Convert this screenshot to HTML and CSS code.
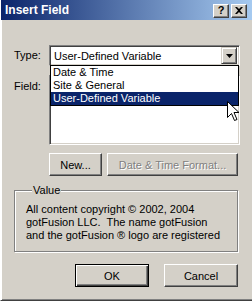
FILE: index.html
```html
<!DOCTYPE html>
<html lang="en">
<head>
    <meta charset="UTF-8">
    <title>Insert Field</title>
    <link rel="stylesheet" href="styles.css">
</head>
<body>
    <div class="window">
        <div class="titlebar">
            <span class="title">Insert Field</span>
            <div class="caption-buttons">
                <span class="cap-btn cap-help">?</span>
                <span class="cap-btn">
                    <svg width="8" height="7" viewBox="0 0 8 7">
                        <path d="M0 0h2l2 2 2-2h2L5 3.5 8 7H6L4 5 2 7H0l3-3.5z" fill="#000"/>
                    </svg>
                </span>
            </div>
        </div>

        <div class="content">
            <div class="form">
                <span class="label">Type:</span>
                <div class="combo">
                    <span class="combo-text">User-Defined Variable</span>
                    <span class="drop-btn">
                        <svg width="7" height="4" viewBox="0 0 7 4"><path d="M0 0h7L3.5 4z" fill="#000"/></svg>
                    </span>
                    <ul class="drop-list">
                        <li>Date &amp; Time</li>
                        <li>Site &amp; General</li>
                        <li class="selected">User-Defined Variable</li>
                    </ul>
                </div>

                <span class="label label-field">Field:</span>
                <div class="listbox"></div>

                <div class="action-row">
                    <button class="btn btn-new">New...</button>
                    <button class="btn btn-format" disabled>Date &amp; Time Format...</button>
                </div>
            </div>

            <fieldset class="group">
                <legend>Value</legend>
                <p>All content copyright &copy; 2002, 2004<br>gotFusion LLC.&nbsp; The name gotFusion<br>and the gotFusion &reg; logo are registered</p>
            </fieldset>

            <div class="dialog-buttons">
                <button class="btn btn-default">OK</button>
                <button class="btn">Cancel</button>
            </div>
        </div>

        <!-- mouse pointer over the open list -->
        <svg class="cursor" width="13" height="21" viewBox="0 0 13 21">
            <path d="M0.5 0.5V16.5L4.5 12.5L7.5 19.5L10 18.5L7 11.5H12Z" fill="#fff" stroke="#000" stroke-width="1"/>
        </svg>
    </div>
</body>
</html>
```

FILE: styles.css
```css
* {
    margin: 0;
    padding: 0;
    box-sizing: border-box;
}

body {
    background: #D4D0C8;
    font-family: 'Liberation Sans', Arial, sans-serif;
    font-size: 11px;
    color: #000;
}

.window {
    position: relative;
    width: 252px;
    height: 301px;
    background: #D4D0C8;
    border-left: 1px solid #fff;
    border-bottom: 1px solid #404040;
    box-shadow: inset 1px 0 #fff, inset 0 -1px #808080;
    overflow: hidden;
}

.titlebar {
    display: flex;
    align-items: center;
    justify-content: space-between;
    height: 20px;
    margin-left: -1px;
    padding: 0 5px 0 5px;
    background: linear-gradient(90deg, #0A246A, #A6CAF0);
}

.title {
    color: #fff;
    font-weight: bold;
    font-size: 12px;
}

.caption-buttons {
    display: flex;
    gap: 2px;
    margin-top: 1px;
}

.cap-btn {
    display: flex;
    align-items: center;
    justify-content: center;
    width: 16px;
    height: 14px;
    background: #D4D0C8;
    border: 1px solid;
    border-color: #fff #404040 #404040 #fff;
    box-shadow: inset -1px -1px #808080;
}

.cap-help {
    font-weight: bold;
    font-size: 11px;
    line-height: 1;
}

.content {
    padding: 25px 12px 0 13px;
}

.form {
    display: grid;
    grid-template-columns: 26px 1fr;
    column-gap: 9px;
    row-gap: 9px;
}

.label {
    text-align: right;
    line-height: 21px;
    white-space: nowrap;
}

.label-field {
    line-height: 13px;
    margin-top: 5px;
}

.sunken,
.combo,
.listbox {
    background: #fff;
    border: 1px solid;
    border-color: #808080 #fff #fff #808080;
    box-shadow: inset 1px 1px #404040, inset -1px -1px #D4D0C8;
}

.combo {
    position: relative;
    display: flex;
    align-items: center;
    justify-content: space-between;
    height: 21px;
    padding: 0 2px 0 4px;
}

.drop-btn {
    display: flex;
    align-items: center;
    justify-content: center;
    width: 16px;
    height: 17px;
    background: #D4D0C8;
    border: 1px solid;
    border-color: #D4D0C8 #404040 #404040 #D4D0C8;
    box-shadow: inset 1px 1px #fff, inset -1px -1px #808080;
}

.drop-list {
    position: absolute;
    top: 100%;
    left: 0;
    right: 0;
    z-index: 2;
    list-style: none;
    background: #fff;
    border: 1px solid #000;
}

.drop-list li {
    height: 13px;
    line-height: 13px;
    padding-left: 2px;
}

.drop-list .selected {
    background: #0A246A;
    color: #fff;
}

.listbox {
    height: 70px;
}

.action-row {
    grid-column: 2;
    display: flex;
    gap: 5px;
    margin-top: -1px;
}

.btn {
    height: 23px;
    font-family: inherit;
    font-size: 11px;
    color: #000;
    background: #D4D0C8;
    border: 1px solid;
    border-color: #fff #404040 #404040 #fff;
    box-shadow: inset -1px -1px #808080;
}

.btn-new {
    width: 53px;
}

.btn-format {
    width: 131px;
}

.btn:disabled {
    color: #808080;
    text-shadow: 1px 1px #fff;
}

.btn-default {
    border-color: #000;
    box-shadow: inset 1px 1px #fff, inset -1px -1px #404040, inset -2px -2px #808080;
}

.group {
    margin: 8px 2px 0 0;
    padding: 6px 8px 9px 11px;
    border: 1px solid #808080;
    box-shadow: inset 1px 1px #fff, 1px 1px #fff;
}

.group legend {
    margin-left: 6px;
    padding: 0 1px;
    line-height: 13px;
    background: #D4D0C8;
}

.group p {
    line-height: 13px;
    white-space: nowrap;
}

.dialog-buttons {
    display: flex;
    justify-content: flex-end;
    gap: 15px;
    margin-top: 12px;
    padding-right: 2px;
}

.dialog-buttons .btn {
    width: 74px;
}

.cursor {
    position: absolute;
    left: 226px;
    top: 101px;
    z-index: 3;
}
```
